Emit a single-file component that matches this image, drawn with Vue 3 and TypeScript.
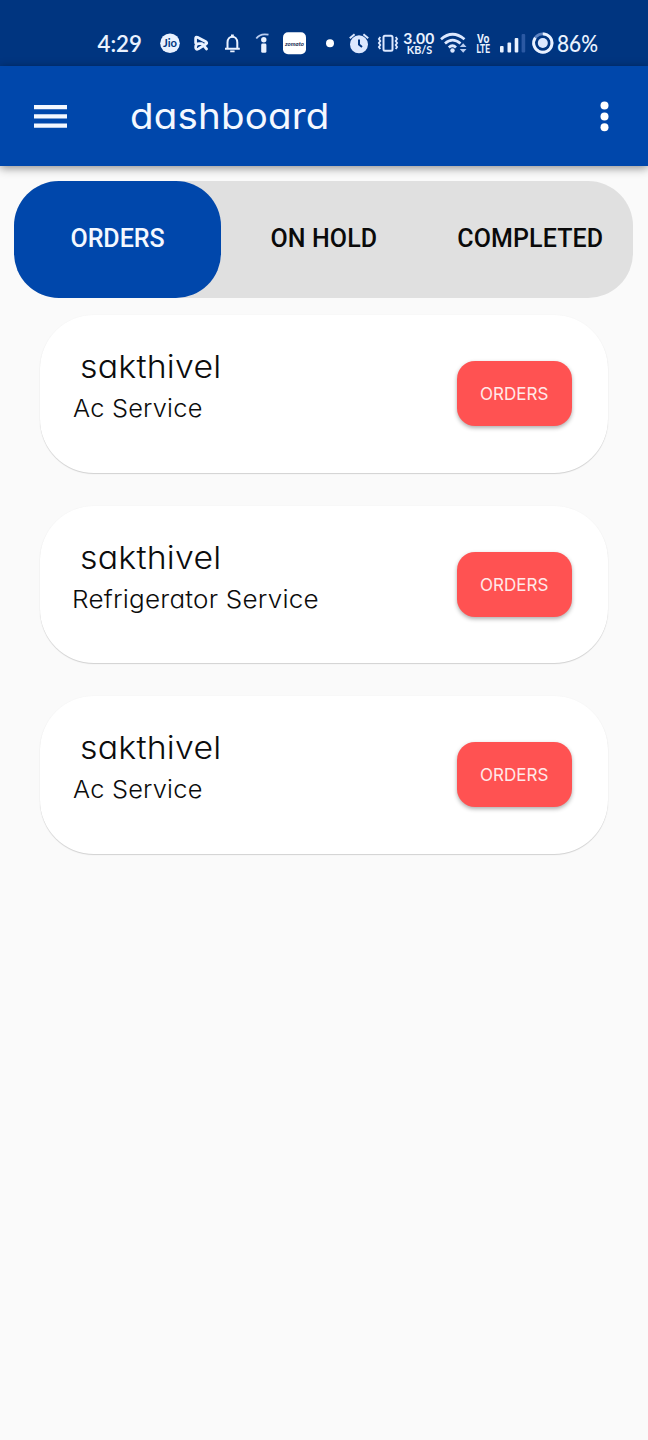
<script setup lang="ts">
import { ref } from 'vue'

interface Order {
  id: number
  customer: string
  service: string
}

const tabs: string[] = ['ORDERS', 'ON HOLD', 'COMPLETED']
const active = ref<number>(0)

const orders: Order[] = [
  { id: 1, customer: 'sakthivel', service: 'Ac Service' },
  { id: 2, customer: 'sakthivel', service: 'Refrigerator Service' },
  { id: 3, customer: 'sakthivel', service: 'Ac Service' },
]
</script>

<template>
  <div class="screen">
    <div class="status">
      <svg width="648" height="66" viewBox="0 0 648 66" fill="#eaf2ff">
        <text x="97.500" y="51.700" class="clock" textLength="44.500" lengthAdjust="spacingAndGlyphs">4:29</text>
        <!-- Jio -->
        <circle cx="170" cy="43.300" r="9.800" />
        <text x="163" y="47" class="jio" textLength="14" lengthAdjust="spacingAndGlyphs">Jio</text>
        <!-- play ribbon -->
        <path d="M195.600 43V38.400Q195.600 36.600 197.400 37.200L206 41.800Q207.600 42.900 206 44L198.400 48.900Q195.600 50.200 195.600 47.300Q195.600 43.600 199 43.600H202L206.600 49" fill="none" stroke="#eaf2ff" stroke-width="2.700" stroke-linejoin="round" stroke-linecap="round" />
        <!-- bell -->
        <path d="M227.500 48.500V42.500C227.500 34.800 237.300 34.800 237.300 42.500V48.500" fill="none" stroke="#eaf2ff" stroke-width="2" />
        <path d="M225 47.700H239.800V49.700H225ZM231 34.500H233.800V37.500H231ZM230.200 50.500H234.600V52.300H230.200Z" />
        <!-- i with arc -->
        <circle cx="263.800" cy="39.800" r="2.700" />
        <rect x="261.200" y="43.600" width="5.200" height="9.200" rx="1.400" />
        <path d="M256.300 38.500Q260 33 268.500 34.700" fill="none" stroke="#b9cdf0" stroke-width="1.700" />
        <!-- zomato -->
        <rect x="283" y="32.200" width="23" height="22" rx="5" fill="#fff" />
        <text x="285" y="45.500" class="zomato" textLength="19" lengthAdjust="spacingAndGlyphs">zomato</text>
        <circle cx="330" cy="43.300" r="4" fill="#fff" />
        <!-- alarm -->
        <circle cx="359" cy="44.300" r="9" fill="#dce8ff" />
        <path d="M349.800 38.200L354.600 34.200M363.400 34.200L368.200 38.200" stroke="#dce8ff" stroke-width="2" />
        <path d="M359 39.500V44.500L362 47" fill="none" stroke="#003580" stroke-width="2" />
        <!-- vibrate -->
        <rect x="383.500" y="35.800" width="9" height="15" rx="1.500" fill="none" stroke="#dce8ff" stroke-width="2" />
        <path d="M380.300 37L378.900 39L380.300 41L378.900 43L380.300 45L378.900 47L380.300 49M395.700 37L397.100 39L395.700 41L397.100 43L395.700 45L397.100 47L395.700 49" fill="none" stroke="#dce8ff" stroke-width="1.800" />
        <text x="403.300" y="44.200" class="rate" textLength="31" lengthAdjust="spacingAndGlyphs">3.00</text>
        <text x="406.800" y="54.200" class="unit" textLength="25.500" lengthAdjust="spacingAndGlyphs">KB/S</text>
        <!-- wifi -->
        <g fill="none" stroke="#dce8ff" stroke-width="2.700">
          <path d="M441 39.200Q452.500 29.300 464.500 39.200" />
          <path d="M445 43.500Q452.500 36.800 460.500 43.500" />
          <path d="M448.800 47.500Q452.500 44 456 47.500" />
        </g>
        <circle cx="452.500" cy="50.500" r="2.200" fill="#dce8ff" />
        <path d="M459.800 47L463.200 43.300L466.500 47ZM459.800 49L463.200 52.700L466.500 49Z" fill="#b9cdf0" />
        <text x="477" y="42.700" class="volte" textLength="12.500" lengthAdjust="spacingAndGlyphs">Vo</text>
        <text x="476.500" y="52.500" class="volte" textLength="13.500" lengthAdjust="spacingAndGlyphs">LTE</text>
        <!-- signal -->
        <rect x="500" y="46" width="3.600" height="6.500" rx="1" />
        <rect x="507.500" y="42.500" width="3.600" height="10" rx="1" />
        <rect x="514.700" y="38" width="3.600" height="14.500" rx="1" />
        <rect x="521.600" y="34" width="3.600" height="18.500" rx="1" fill="#2b59a3" />
        <!-- battery ring -->
        <circle cx="542.800" cy="43" r="9.200" fill="none" stroke="#5f84c2" stroke-width="2.800" />
        <path d="M542.800 33.800A9.200 9.200 0 1 1 535.300 37.700" fill="none" stroke="#eaf2ff" stroke-width="2.800" />
        <circle cx="542.800" cy="43" r="5" fill="#dce8ff" />
        <text x="557" y="51.500" class="battery" textLength="41" lengthAdjust="spacingAndGlyphs">86%</text>
      </svg>
    </div>

    <header class="appbar">
      <button class="icon" aria-label="Menu">
        <svg width="33" height="23" viewBox="0 0 33 23" fill="#f4f8ff">
          <path d="M0 0H33V4.200H0ZM0 9.300H33V13.500H0ZM0 18.600H33V22.800H0Z" />
        </svg>
      </button>
      <h1 class="title">dashboard</h1>
      <button class="icon" aria-label="More">
        <svg width="9" height="31" viewBox="0 0 9 31" fill="#fff">
          <circle cx="4.500" cy="4.500" r="4" />
          <circle cx="4.500" cy="15.400" r="4" />
          <circle cx="4.500" cy="26.300" r="4" />
        </svg>
      </button>
    </header>

    <nav class="tabs">
      <button
        v-for="(tab, i) in tabs"
        :key="tab"
        class="tab"
        :class="{ active: i === active }"
        @click="active = i"
      >{{ tab }}</button>
    </nav>

    <main class="list">
      <article v-for="order in orders" :key="order.id" class="card">
        <div class="info">
          <div class="name">{{ order.customer }}</div>
          <div class="service" :class="{ long: order.service.length > 12 }">{{ order.service }}</div>
        </div>
        <button class="action">ORDERS</button>
      </article>
    </main>
  </div>
</template>

<style>
body {
  background: #fafafa;
}
</style>

<style scoped>
.screen {
  width: 648px;
  height: 1440px;
  overflow: hidden;
  background: #fafafa;
  font-family: Inter, sans-serif;
  font-feature-settings: 'cv11' 1;
}
button {
  border: 0;
  padding: 0;
  margin: 0;
  background: none;
  font: inherit;
  font-feature-settings: inherit;
}
.status {
  height: 66px;
  background: #003580;
}
.status svg {
  display: block;
}
.clock {
  font: 600 22.5px Lato, sans-serif;
}
.jio {
  font: 700 10.5px Lato, sans-serif;
  fill: #003580;
}
.zomato {
  font: italic 700 6px Lato, sans-serif;
  fill: #14284f;
}
.rate {
  font: 700 16px Lato, sans-serif;
}
.unit {
  font: 700 11.5px Lato, sans-serif;
}
.volte {
  font: 700 12.5px Roboto, sans-serif;
}
.battery {
  font: 500 22.5px Lato, sans-serif;
}
.appbar {
  height: 100px;
  box-sizing: border-box;
  padding: 0 39px 0 34px;
  display: flex;
  align-items: center;
  background: #0047ab;
  box-shadow: 0 2px 9px rgba(0, 0, 0, 0.45);
}
.icon {
  display: flex;
}
.title {
  flex: 1;
  margin: 0 0 0 62.5px;
  font-size: 36px;
  line-height: 44px;
  font-weight: 380;
  letter-spacing: 0.2px;
  transform: scaleX(1.068);
  transform-origin: left;
  color: #f4f8ff;
}
.tabs {
  height: 117px;
  margin: 15px 14.6px 0 14.4px;
  display: grid;
  grid-template-columns: repeat(3, 1fr);
  border-radius: 45px;
  background: #e0e0e0;
}
.tab {
  border-radius: 45px;
  padding-bottom: 3px;
  font-family: Roboto, sans-serif;
  font-size: 25px;
  font-weight: 475;
  letter-spacing: 0.1px;
  color: #0a0a0a;
  white-space: nowrap;
}
.tab.active {
  background: #0047ab;
  color: #f4f8ff;
  font-weight: 500;
  letter-spacing: 0;
}
.list {
  display: flex;
  flex-direction: column;
  gap: 33px;
  padding: 16.9px 40px 0;
}
.card {
  height: 157.7px;
  box-sizing: border-box;
  padding: 0 36px 0.6px 33px;
  display: flex;
  justify-content: space-between;
  align-items: center;
  border-radius: 54px;
  background: #fff;
  box-shadow: 0 1px 1px rgba(0, 0, 0, 0.16), 0 0 2px rgba(0, 0, 0, 0.03);
}
.info {
  align-self: flex-start;
  padding-top: 31px;
  color: #0c0c0c;
}
.name,
.service {
  font-weight: 320;
  line-height: 42px;
  transform-origin: left;
}
.name {
  margin-left: 7.2px;
  font-size: 31.5px;
  letter-spacing: 0.2px;
  transform: scaleX(1.075);
}
.service {
  margin-left: -0.5px;
  font-size: 24px;
  letter-spacing: 0.2px;
  transform: scaleX(1.057);
}
.service.long {
  margin-left: -1.3px;
  transform: scaleX(1.085);
}
.action {
  width: 115.5px;
  height: 65px;
  padding-top: 1px;
  border-radius: 18px;
  background: #ff5252;
  color: #ffe9e9;
  font-size: 17px;
  font-weight: 380;
  box-shadow: 0 2px 4px rgba(0, 0, 0, 0.32);
}
</style>
